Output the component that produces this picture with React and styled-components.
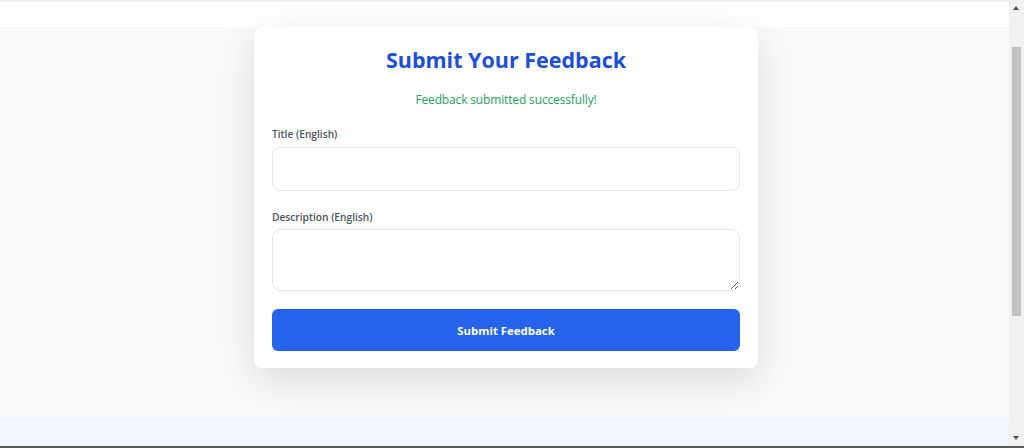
import styled, { createGlobalStyle } from "styled-components";

const GlobalStyle = createGlobalStyle`
  body {
    margin: 0;
    font-family: "Open Sans", "Liberation Sans", sans-serif;
    background: #ffffff;
    overflow: hidden;
  }
`;

// Page sections
const Page = styled.div`
  display: flex;
  flex-direction: column;
  height: 448px;
`;

const Header = styled.header`
  height: 25px;
  background: #ffffff;
  border-top: 2px solid #efefef;
`;

const Main = styled.main`
  background: #f9fafb;
  display: flex;
  justify-content: center;
  padding: 0 12px 49px 0;
`;

const Footer = styled.footer`
  flex: 1;
  background: #eff6ff;
  border-bottom: 2px solid #5a5a5a;
`;

// Fake browser scrollbar shown in the screenshot
const ScrollTrack = styled.div`
  position: fixed;
  top: 0;
  right: 0;
  width: 15px;
  height: 446px;
  background: #f1f1f1;
`;

const ScrollThumb = styled.div`
  position: absolute;
  top: 47px;
  left: 3px;
  width: 9px;
  height: 269px;
  background: #c1c1c1;
`;

const Arrow = styled.div`
  position: absolute;
  left: 4px;
  width: 0;
  height: 0;
  border-left: 3.5px solid transparent;
  border-right: 3.5px solid transparent;
  ${(p) =>
    p.$down
      ? "bottom: 6px; border-top: 4px solid #505050;"
      : "top: 6px; border-bottom: 4px solid #505050;"}
`;

// Card
const Card = styled.div`
  width: 504px;
  box-sizing: border-box;
  background: #ffffff;
  border-radius: 8px;
  padding: 17px 18px 17px;
  box-shadow: 0 12px 40px rgba(0, 0, 0, 0.13);
  display: flex;
  flex-direction: column;
`;

const Title = styled.h1`
  margin: 0;
  text-align: center;
  font-size: 21.5px;
  line-height: 32px;
  font-weight: 700;
  color: #1d4ed8;
`;

const Success = styled.p`
  margin: 14px 0 15px;
  text-align: center;
  font-size: 12px;
  line-height: 20px;
  letter-spacing: -0.15px;
  color: #2a9d62;
`;

const Field = styled.div`
  display: flex;
  flex-direction: column;
  margin-bottom: ${(p) => p.$gap}px;
`;

const Label = styled.label`
  font-size: 10.2px;
  line-height: 18px;
  font-weight: 600;
  color: #4b5563;
  margin-bottom: ${(p) => p.$gap}px;
`;

const Input = styled.input`
  box-sizing: border-box;
  height: 44px;
  width: 100%;
  border: 1.5px solid #e5e7eb;
  border-radius: 8px;
  padding: 0 12px;
  font: inherit;
  outline: none;
`;

const TextArea = styled.textarea`
  box-sizing: border-box;
  height: 62px;
  width: 100%;
  border: 1.5px solid #e5e7eb;
  border-radius: 8px;
  padding: 10px 12px;
  font: inherit;
  outline: none;
  display: block;
`;

const Button = styled.button`
  height: 42px;
  width: 100%;
  border: none;
  border-radius: 6px;
  background: #2563eb;
  color: #ffffff;
  font-family: inherit;
  font-size: 11.4px;
  font-weight: 700;
  cursor: pointer;
`;

export default function App() {
  return (
    <>
      <GlobalStyle />
      <Page>
        <Header />
        <Main>
          <Card>
            <Title>Submit Your Feedback</Title>
            <Success>Feedback submitted successfully!</Success>
            <Field $gap={17}>
              <Label $gap={4}>Title (English)</Label>
              <Input type="text" />
            </Field>
            <Field $gap={18}>
              <Label $gap={3}>Description (English)</Label>
              <TextArea />
            </Field>
            <Button>Submit Feedback</Button>
          </Card>
        </Main>
        <Footer />
      </Page>
      <ScrollTrack>
        <Arrow />
        <ScrollThumb />
        <Arrow $down />
      </ScrollTrack>
    </>
  );
}
